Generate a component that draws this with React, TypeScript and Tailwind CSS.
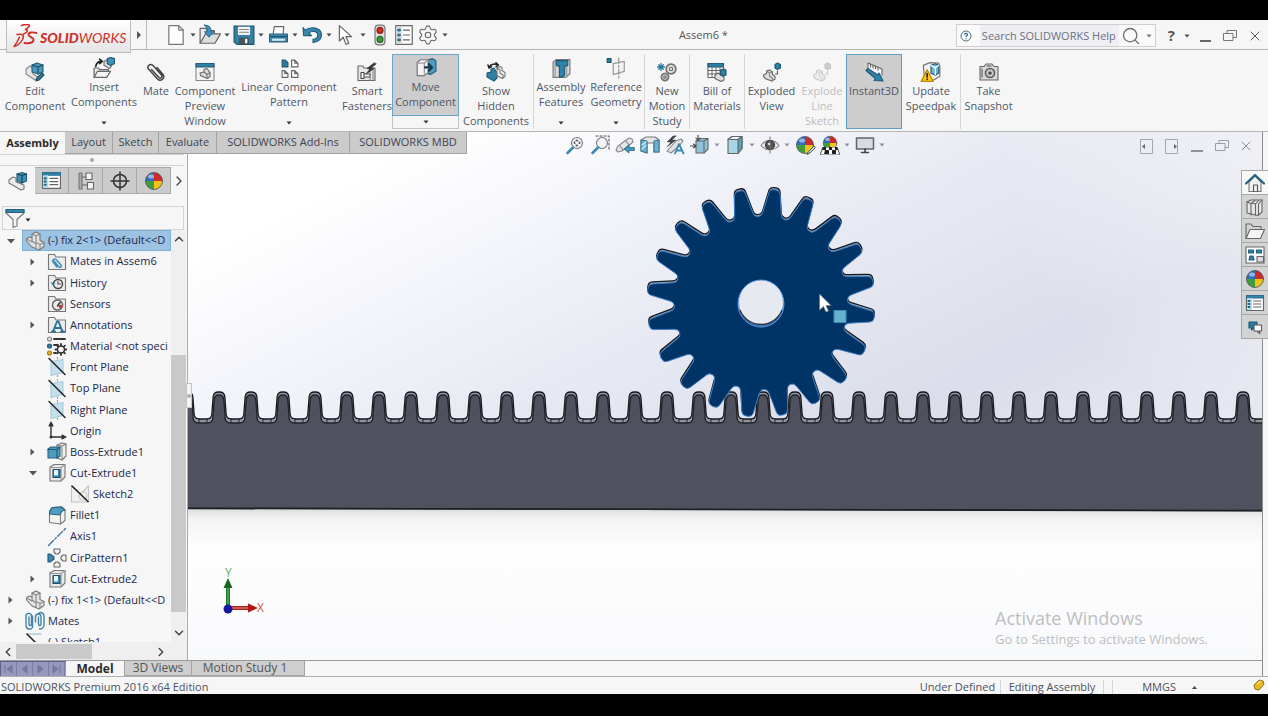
import React from "react";
import {
  ChevronDown,
  ChevronLeft,
  ChevronRight,
  ChevronUp,
  Minus,
  Search,
  Settings,
  X,
} from "lucide-react";

type IconProps = { className?: string };
type SvgProps = IconProps & { children: React.ReactNode };

const Svg = ({ className = "w-5 h-5", children }: SvgProps) => (
  <svg
    viewBox="0 0 20 20"
    className={`shrink-0 ${className}`}
    fill="none"
    stroke="#666"
    strokeWidth="1.1"
    strokeLinejoin="round"
    strokeLinecap="round"
    aria-hidden="true"
  >
    {children}
  </svg>
);

const Caret = ({ className = "text-[#4a4a4a]" }: IconProps) => (
  <svg viewBox="0 0 6 4" className={`w-[6px] h-1 shrink-0 ${className}`} aria-hidden="true">
    <path d="M0.5 0.5h5L3 3.5z" fill="currentColor" />
  </svg>
);

/* ---------- shared icons ---------- */

const Ball = ({ className }: IconProps) => (
  <Svg className={className}>
    <g stroke="none">
      <path d="M10 10V1.5A8.5 8.5 0 0 0 1.5 10z" fill="#2f6fc0" />
      <path d="M10 10V1.5A8.5 8.5 0 0 1 18.5 10z" fill="#cf2b2b" />
      <path d="M10 10v8.5A8.5 8.5 0 0 1 1.5 10z" fill="#3f9e3a" />
      <path d="M10 10v8.5A8.5 8.5 0 0 0 18.5 10z" fill="#f0c41d" />
      <ellipse cx="7" cy="5.5" rx="3" ry="2" fill="#fff" opacity="0.5" />
    </g>
    <circle cx="10" cy="10" r="8.5" stroke="#4b4b55" strokeWidth="0.8" />
  </Svg>
);

const Restore = ({ className }: IconProps) => (
  <svg viewBox="0 0 14 12" className={`w-[14px] h-3 ${className}`} fill="none" stroke="currentColor" aria-hidden="true">
    <path d="M4 3.5v-3h9.5v7H10" />
    <path d="M0.500 3.500h9.500v7h-9.500z" />
  </svg>
);

const PropertyList = ({ className }: IconProps) => (
  <Svg className={className}>
    <path d="M1.500 2.500h17v15h-17z" fill="#fff" />
    <path d="M1.500 2.500h17v2.500h-17z" fill="#3285ab" stroke="#2c6f91" />
    <path d="M2 5h5v12H2z" fill="#b7dcea" stroke="none" />
    <path d="M3.500 8h1M3.500 11h1M3.500 14h1" stroke="#1f6788" strokeWidth="2" />
    <path d="M8.500 8h7.500M8.500 11h7.500M8.500 14h7.500" />
  </Svg>
);

const Part = ({ className }: IconProps) => (
  <Svg className={className}>
    <path d="M1.500 8l2.500-2 3 1V3l4-2 4 2v6.500l4 2v4L14 19l-7-3-5.500-6z" fill="#e3e3e3" stroke="#777" />
    <path d="M7 3l4 2 4-2M11 5v6.500l4 2 4-2M15 13.500V18M7 7v3l4 3v4M1.500 8l5.500 3" stroke="#888" />
  </Svg>
);

const Assembly = ({ className }: IconProps) => (
  <Svg className={className}>
    <path d="M1 9l4-3 3 1v4l8 3v4l-3 1-12-7z" fill="#ececec" stroke="#777" />
    <path d="M9 3l5-1.500 4.500 1.500v7L14 12l-5-2z" fill="#4193b8" stroke="#225c78" />
    <path d="M9 3l5 1.500 4.500-1.500M14 4.500V12" stroke="#123f56" />
  </Svg>
);

const Plane = ({ className }: IconProps) => (
  <Svg className={className}>
    <path d="M4 4.500l12-2v13l-12 3z" fill="#c3dfec" stroke="#a9cbdb" />
    <path d="M10.500 0v2M10.500 18v2" stroke="#8aa" />
    <path d="M2 1.500l16 16" stroke="#222" strokeWidth="1.500" />
  </Svg>
);

const Folder = ({ className, children }: { className?: string; children: React.ReactNode }) => (
  <Svg className={className}>
    <path d="M1.500 17.500v-15h6l1.500 2.500h9.500v12.500z" fill="#ececec" stroke="#777" />
    {children}
  </Svg>
);

const CutExtrude = ({ className }: IconProps) => (
  <Svg className={className}>
    <path d="M3 4l4-2.500h11V14l-4 4H3z" fill="#e9e9e9" stroke="#777" />
    <path d="M14 18V5M3 4.500h11l4-3" stroke="#999" />
    <path d="M6 6.500h7v8H6z" fill="#2f86ae" stroke="#234f66" />
    <path d="M7 7h4v5.500H7z" fill="#e6f4fa" stroke="none" />
  </Svg>
);

/* ---------- title bar ---------- */

const NewDoc = () => (
  <Svg className="w-[22px] h-[22px]">
    <path d="M3.500 1.500h9l4 4v13h-13z" fill="#fff" stroke="#777" />
    <path d="M12.500 1.500v4h4" stroke="#777" />
  </Svg>
);
const OpenDoc = () => (
  <Svg className="w-[24px] h-[22px]">
    <path d="M1 17V4h5l1.500 2H14v4" fill="#eee" stroke="#666" />
    <path d="M1 17.500L6 9h13.500l-5 8.500z" fill="#ddd" stroke="#666" />
    <path d="M5 1c5 0 6 3 6 6h2.500l-4.500 5-4-5h2.500c0-2-.5-4-2.500-6z" fill="#3b93bd" stroke="#235c78" strokeWidth="0.8" />
  </Svg>
);
const Save = () => (
  <Svg className="w-[22px] h-[22px]">
    <path d="M1 2h18v16.500H3.500L1 16.500z" fill="#3480a5" stroke="#1f546e" />
    <path d="M4.500 2.500h11v7.500h-11z" fill="#f3f3f3" stroke="none" />
    <path d="M6 5h8M6 7.500h8" stroke="#888" />
    <path d="M5.500 12.500h9v6h-9z" fill="#49535a" stroke="none" />
    <path d="M11 13.500h2v4h-2z" fill="#fff" stroke="none" />
  </Svg>
);
const Print = () => (
  <Svg className="w-[21px] h-[21px]">
    <path d="M5 9l1-6.500h9L14.500 9" fill="#fff" stroke="#666" />
    <path d="M1.500 9.500h17v7.500h-17z" fill="#3f8eb3" stroke="#2a5f79" />
    <path d="M2.500 12h15" stroke="#174c66" />
    <path d="M4 14h12v2H4z" fill="#d7ebf4" stroke="none" />
  </Svg>
);
const Undo = () => (
  <Svg className="w-[21px] h-[21px]">
    <path d="M1 3.500l2 2.500c5-4 15-3 15.500 4 .2 5-4 7.500-8 7.500v-3c3 0 5-2 4.500-4.500-.5-3.500-6-3.500-8.500-1.500L9 11H1.500z" fill="#3a88ae" stroke="#1f5d7c" />
  </Svg>
);
const Pointer = () => (
  <Svg className="w-[22px] h-[22px]">
    <path d="M4 1.500v14l3.500-3.500 2.500 6.500 2.500-1-2.500-6h5z" fill="#fff" stroke="#666" />
  </Svg>
);
const TrafficLight = () => (
  <Svg className="w-[22px] h-[22px]">
    <rect x="5.500" y="1" width="9" height="18" rx="3" fill="#e0e0e0" stroke="#777" />
    <circle cx="10" cy="5.800" r="2.700" fill="#d1311f" stroke="#8c2116" />
    <circle cx="10" cy="14" r="2.700" fill="#3c9b34" stroke="#256c20" />
  </Svg>
);
const Options = () => (
  <Svg className="w-[22px] h-[22px]">
    <path d="M2.500 1.500h15v17h-15z" fill="#fff" />
    <path d="M3 2h5v16H3z" fill="#d6d6d6" stroke="none" />
    <path d="M5 5.500h1M5 10h1M5 14.500h1" stroke="#246f94" strokeWidth="2.500" />
    <path d="M9.500 5.500H15M9.500 10H15M9.500 14.500H15" />
  </Svg>
);

const quickTools = [
  { name: "New", icon: <NewDoc />, menu: true },
  { name: "Open", icon: <OpenDoc />, menu: true },
  { name: "Save", icon: <Save />, menu: true },
  { name: "Print", icon: <Print />, menu: true },
  { name: "Undo", icon: <Undo />, menu: true },
  { name: "Select", icon: <Pointer />, menu: true },
  { name: "Rebuild", icon: <TrafficLight />, menu: false },
  { name: "File properties", icon: <Options />, menu: false },
  {
    name: "Options",
    icon: <Settings className="w-[22px] h-[22px] text-[#666]" strokeWidth={1.2} />,
    menu: true,
  },
];

const Logo = () => (
  <div className="relative z-10 self-start flex items-center h-[33px] w-[125px] ml-[6px] pl-[5px] bg-gradient-to-b from-white to-[#e4e4e4] border border-[#bdbdbd] border-t-0 text-[#cf2f2a]">
    <svg viewBox="0 0 26 24" className="w-[26px] h-6" fill="none" stroke="currentColor" strokeLinecap="round" strokeLinejoin="round" aria-hidden="true">
      <path d="M9.500 1.500C13 .2 17.500 0 17.500 1.500S14 5 13.500 5.500c3 .3 2.500 3-2 4.500" strokeWidth="1.500" />
      <path d="M5 10.500c5-1 8 .5 5.500 5S4.500 22 2 22.500c2-2.500 4.500-7 5.500-9.500" strokeWidth="1.500" />
      <path d="M24.500 9c-4-1-8-.8-8 1.500 0 2.500 5.500 2.800 5 5.500-.4 2.800-5 3.500-9 3" strokeWidth="1.900" />
    </svg>
    <span className="ml-[2px] pt-1 font-['Lato'] italic text-[14px] leading-none">
      <b className="font-black">SOLID</b>WORKS
    </span>
  </div>
);

const TitleBar = () => (
  <header className="flex items-center h-[30px] border-b border-[#b5b5b5] bg-[#f6f6f6]">
    <Logo />
    <button aria-label="Show menu" className="w-4 h-full flex items-center justify-center border-r border-[#b9b9b9]">
      <svg viewBox="0 0 4 8" className="w-1 h-2" aria-hidden="true">
        <path d="M0 0l4 4-4 4z" fill="#555" />
      </svg>
    </button>
    <div className="flex items-center ml-[18px]">
      {quickTools.map((t) => (
        <button key={t.name} aria-label={t.name} className={t.menu ? "flex items-center w-[34px]" : "flex items-center w-6"}>
          <span className="w-[22px] flex justify-center">{t.icon}</span>
          {t.menu && <Caret className="ml-[3px] text-[#444]" />}
        </button>
      ))}
    </div>
    <h1 className="flex-1 text-center text-[#555] pt-[2px]">Assem6 *</h1>
    <form className="flex items-center h-[23px] w-[200px] mt-[2px] border border-[#cfcfcf] bg-[#fafafa]">
      <svg viewBox="0 0 12 12" className="w-3 h-3 ml-[3px]" fill="none" stroke="#4f6f80" aria-hidden="true">
        <circle cx="6" cy="6" r="5" />
        <path d="M4.500 4.800c0-2 3-2 3 0 0 1-1.500 1-1.500 2.200M6 8.200v1" stroke="#226f94" strokeWidth="1.200" />
      </svg>
      <input
        aria-label="Search SOLIDWORKS Help"
        placeholder="Search SOLIDWORKS Help"
        className="ml-2 w-[139px] h-[21px] bg-[#eeeef3] px-[2px] text-[11px] placeholder:text-[#6c7082] outline-none"
      />
      <button type="button" aria-label="Search" className="flex items-center gap-[5px] pl-[2px]">
        <Search className="w-5 h-5 text-[#6d6d6d]" strokeWidth={1.6} />
        <Caret className="text-[#777]" />
      </button>
    </form>
    <div className="flex items-center pt-[2px] text-[#555]">
      <button aria-label="Help" className="ml-3 flex items-center gap-[9px]">
        <b className="text-[15px] leading-none">?</b>
        <Caret />
      </button>
      <button aria-label="Minimize" className="ml-2 w-[14px] h-3 flex items-end justify-center">
        <span className="w-[11px] h-[2px] bg-[#666]" />
      </button>
      <button aria-label="Restore" className="ml-[11px]"><Restore className="text-[#777]" /></button>
      <button aria-label="Close" className="ml-[10px] mr-[5px]"><X className="w-4 h-4" strokeWidth={1.5} /></button>
    </div>
  </header>
);

/* ---------- ribbon ---------- */

const EditComponentIcon = () => (
  <Svg>
    <path d="M1 7l4-3 3 2v6l5 3-3 3-9-6z" fill="#e6e6e6" stroke="#888" />
    <path d="M7 3l5-2 6 2v7l-5 2-6-2z" fill="#4a98bb" stroke="#235d79" />
    <path d="M7 3l6 2 5-2M13 5v7" stroke="#184a63" />
    <path d="M17 11l2 2-5 5-3 1 1-3z" fill="#2f7fa4" stroke="#234f66" />
  </Svg>
);
const InsertIcon = () => (
  <Svg className="w-[22px] h-[22px]">
    <path d="M1 18.500V10h4l1 1.500h8V13" fill="#eee" />
    <path d="M1 18.500L4 13h12l-3.500 5.500z" fill="#f5f5f5" />
    <path d="M2.500 8.500C3 5 5 4 8 4M6 2l2.500 2L6 6" stroke="#222" strokeWidth="1.500" />
    <path d="M10 4l3-1.500 1.500 4L17 8l-2 2.500-5-3z" fill="#ddd" stroke="#777" />
    <path d="M13 1.500l3-1 3.500 1V6L16 7.500 13 6z" fill="#4193b8" stroke="#235d79" />
  </Svg>
);
const MateIcon = () => (
  <Svg>
    <path d="M5.500 7.500l7.500 8c1.500 1.500 4-.5 2.500-2.500L7 3.500C4.500 1 .5 4 2.500 7l9 10c3 3 8-.5 5.500-4.500L11 5.500" stroke="#444" strokeWidth="1.500" />
  </Svg>
);
const PreviewIcon = () => (
  <Svg>
    <path d="M1 1.500h18v17H1z" fill="#f2f2f2" stroke="#888" />
    <path d="M1 1.500h18v3.500H1z" fill="#2f7fa6" stroke="#235d79" />
    <path d="M5 11l4-1V7.500l3-1 3 4v4l-2.500 2-7-3z" fill="#dcdcdc" stroke="#666" />
    <path d="M9 10l3 2.500v4M12 12.500l3-2" stroke="#777" />
  </Svg>
);
const PatternIcon = () => (
  <Svg className="w-[21px] h-[21px]">
    <path d="M3 2h3l2.500 2.500v4H3z" fill="#2c7aa0" stroke="#1e5874" />
    <path d="M12 2h3l3 3v3.500h-6zM15 2v3h3M3 12h2.500l3 3v3.500H3zM5.500 12v3h3M12 12h3l3 3v3.500h-6zM15 12v3h3" fill="#fff" />
  </Svg>
);
const FastenersIcon = () => (
  <Svg>
    <path d="M1 18.500V4h5l1 2h11v12.500z" fill="#e8e8e8" />
    <path d="M4 10.500h3v6H4zM7 12h6v3H7z" fill="#fff" stroke="#444" />
    <path d="M13 7v11M16 7v11" stroke="#888" />
    <path d="M17 1l-7 5.500 3 .5-4 5 8-5.500-3-.5 5-4z" fill="#333" stroke="#333" strokeWidth="0.700" />
  </Svg>
);
const MoveIcon = () => (
  <Svg className="w-[22px] h-[22px]">
    <path d="M10 3l6-1.500 3 2V13l-5 3-4-2z" fill="#4a9cc2" stroke="#28617e" />
    <path d="M2 5l3-2.500h7V14l-3.500 3H2z" fill="#f4f4f4" stroke="#777" />
    <path d="M2 5.500h6.500L12 2.500M8.500 5.500V17" stroke="#999" />
    <path d="M9 9.500h6M12.500 6.500l3 3-3 3" stroke="#173a4b" strokeWidth="2" />
  </Svg>
);
const ShowHiddenIcon = () => (
  <Svg>
    <path d="M3 5C5 1.500 9 1.500 12 3M10 .800L12.500 3 10 5M2 3l1 3 2.500-1.500" stroke="#222" strokeWidth="1.500" />
    <path d="M1 11l4-1V7l3-1 3 5v5l-3 3-7-4z" fill="#2f7fa6" stroke="#1e5874" />
    <path d="M11 6l3-1.500 2 1v3l3 2v4l-3 2-5-3z" fill="#f0f0f0" stroke="#777" />
    <path d="M11 6l3 2v3l3 2v3" stroke="#777" />
  </Svg>
);
const FeaturesIcon = () => (
  <Svg className="w-[21px] h-[21px]">
    <path d="M2 4l3-2.500h13V15l-4 3.500H2z" fill="#dadada" stroke="#777" />
    <path d="M15 5v13M4 4v14" stroke="#999" />
    <path d="M5 2.500h11V7l-3 1v8.500l-2 1.500H8V8L5 7z" fill="#2f83ab" stroke="#1e5874" />
  </Svg>
);
const GeometryIcon = () => (
  <Svg className="w-[22px] h-[22px]">
    <path d="M2 1.500h3.500V5H2z" fill="#2c7aa0" stroke="#1e5874" />
    <path d="M7.500 6l10-2v9l-10 3z" fill="#f4f4f4" stroke="#999" />
    <path d="M12.500 1v18" stroke="#999" strokeDasharray="5 1.500 2 1.500" />
  </Svg>
);
const MotionIcon = () => (
  <Svg>
    <circle cx="14" cy="7" r="4.800" fill="#e8e8e8" stroke="#777" strokeWidth="1.800" strokeDasharray="2.500 0.500" />
    <circle cx="14" cy="7" r="1.700" />
    <circle cx="8" cy="15" r="3.600" fill="#ddd" stroke="#777" strokeWidth="1.800" strokeDasharray="2.500 0.500" />
    <circle cx="8" cy="15" r="1.300" />
    <path d="M4 1.500v7M.500 5h7M1.800 2.800l4.500 4.500M6.300 2.800L1.800 7.200" stroke="#2c7aa0" strokeWidth="1.300" />
  </Svg>
);
const BomIcon = () => (
  <Svg>
    <path d="M1 1.500h15.500v14H1z" fill="#fff" />
    <path d="M1 1.500h15.500v3.500H1z" fill="#2f7fa6" stroke="#235d79" />
    <path d="M1 8.500h15.500M1 12h15.500M5 5v10.500M9 5v10.500M13 5v10.500" strokeWidth="1" />
    <path d="M8 13l3-2 3 2 3 2v3l-3 1.500-6-3z" fill="#ddd" />
    <path d="M13.500 8l3-1 2.500 1v5l-2.500 1-3-1z" fill="#2f7fa6" stroke="#1e5874" />
  </Svg>
);
const ExplodedIcon = () => (
  <Svg>
    <path d="M1.500 13l3-1.500V9l3-1 3 2v2.500l2.500 2v2.500l-3 2-6-2-2.500-2.500z" fill="#dedede" />
    <path d="M4.500 9l3 2 3-1M7.500 11v3l3 2.500v2.500" stroke="#888" />
    <path d="M13 2.500L15.500 1l3 1.500v3.500l-3 1.500L13 6z" fill="#2f7fa6" stroke="#1e5874" />
    <path d="M15.500 9v3H13" stroke="#555" strokeDasharray="2 1" />
  </Svg>
);
const InstantIcon = () => (
  <Svg>
    <path d="M4 7V1l14 6v6" fill="#f7f7f7" stroke="#666" />
    <path d="M6.500 2.200V5M9 3.200V6M11.500 4.300v2.500M14 5.300V8" stroke="#666" />
    <path d="M2 8.500l2-2 9.500 6.500 1.500-2 4 8-9-.5 1.500-2z" fill="#2f83ab" stroke="#1e5874" />
  </Svg>
);
const SpeedpakIcon = () => (
  <Svg className="w-[22px] h-[22px]">
    <path d="M3 4l6-2.500 8 .5 1 2v10l-6 3.500L4 15z" fill="#f2f2f2" stroke="#777" />
    <path d="M10 4l4-1.500 3 1.500v7l-3 2-4-2z" fill="#6fb4d2" stroke="#28617e" />
    <path d="M14 6v6.500M10 4.200L14 6l3-2" stroke="#fff" />
    <path d="M6.500 8l5.500 10.500H1z" fill="#fcc419" stroke="#b98700" />
    <path d="M6.500 11.500v3M6.500 16.500v.3" stroke="#222" strokeWidth="1.500" />
  </Svg>
);
const CameraIcon = () => (
  <Svg>
    <path d="M1 4.500h4l2-2.500h6l2 2.500h4V18H1z" fill="#d8d8d8" stroke="#666" />
    <circle cx="11" cy="11" r="4.800" fill="#9a9a9a" stroke="#555" />
    <circle cx="11" cy="11" r="2.400" fill="#4a4a4a" stroke="#ddd" />
    <path d="M8 4h4M3 7v8" stroke="#555" />
  </Svg>
);

type Tool = {
  lines: string[];
  icon: React.ReactNode;
  width: string;
  menu?: boolean;
  state?: "active" | "pressed" | "disabled";
  divider?: boolean;
};

const ribbon: Tool[] = [
  { lines: ["Edit", "Component"], icon: <EditComponentIcon />, width: "w-[70px]" },
  { lines: ["Insert", "Components"], icon: <InsertIcon />, width: "w-[68px]", menu: true },
  { lines: ["Mate"], icon: <MateIcon />, width: "w-9" },
  { lines: ["Component", "Preview", "Window"], icon: <PreviewIcon />, width: "w-[62px]" },
  { lines: ["Linear Component", "Pattern"], icon: <PatternIcon />, width: "w-[106px]", menu: true },
  { lines: ["Smart", "Fasteners"], icon: <FastenersIcon />, width: "w-[50px]" },
  { lines: ["Move", "Component"], icon: <MoveIcon />, width: "w-[67px]", menu: true, state: "active" },
  { lines: ["Show", "Hidden", "Components"], icon: <ShowHiddenIcon />, width: "w-[74px]" },
  { lines: ["Assembly", "Features"], icon: <FeaturesIcon />, width: "w-[55px]", menu: true, divider: true },
  { lines: ["Reference", "Geometry"], icon: <GeometryIcon />, width: "w-14", menu: true },
  { lines: ["New", "Motion", "Study"], icon: <MotionIcon />, width: "w-[45px]", divider: true },
  { lines: ["Bill of", "Materials"], icon: <BomIcon />, width: "w-[55px]", divider: true },
  { lines: ["Exploded", "View"], icon: <ExplodedIcon />, width: "w-[54px]", divider: true },
  { lines: ["Explode", "Line", "Sketch"], icon: <ExplodedIcon />, width: "w-12", state: "disabled" },
  { lines: ["Instant3D"], icon: <InstantIcon />, width: "w-14", state: "pressed" },
  { lines: ["Update", "Speedpak"], icon: <SpeedpakIcon />, width: "w-[58px]" },
  { lines: ["Take", "Snapshot"], icon: <CameraIcon />, width: "w-14", divider: true },
];

const RibbonButton = ({ tool }: { tool: Tool }) => {
  const { lines, icon, width, menu, state, divider } = tool;
  const tone =
    state === "active"
      ? "bg-[#cdcdcd] border border-[#6aa5cb]"
      : state === "pressed"
        ? "bg-[#cdcdcd] border border-[#5f9dc6]"
        : "border border-transparent";
  return (
    <div className={`flex flex-col shrink-0 ${width} ${divider ? "border-l border-[#d5d5d5]" : ""}`}>
      <button
        disabled={state === "disabled"}
        className={`flex flex-col items-center leading-[15px] text-[#4f5666] disabled:text-[#bdbdbd] ${tone} ${
          menu ? "pt-[2px] h-[62px]" : "pt-[6px] flex-1"
        }`}
      >
        <span className={`h-[22px] flex items-center ${state === "disabled" ? "opacity-30 grayscale" : ""}`}>{icon}</span>
        {lines.map((l) => (
          <span key={l} className="whitespace-nowrap">{l}</span>
        ))}
      </button>
      {menu && (
        <button
          aria-label={`${lines.join(" ")} options`}
          className={`flex-1 flex items-center justify-center ${state === "active" ? "border border-t-0 border-[#c4c4c4]" : ""}`}
        >
          <Caret className="text-[#333]" />
        </button>
      )}
    </div>
  );
};

const Ribbon = () => (
  <div className="flex h-[82px] pt-1 pb-[2px] bg-[#f6f6f6] border-b border-[#b5b5b5] overflow-hidden">
    {ribbon.map((t) => (
      <RibbonButton key={t.lines.join(" ")} tool={t} />
    ))}
  </div>
);

const tabs = [
  { label: "Assembly", width: "w-[65px]" },
  { label: "Layout", width: "w-[48px]" },
  { label: "Sketch", width: "w-[46px]" },
  { label: "Evaluate", width: "w-[58px]" },
  { label: "SOLIDWORKS Add-Ins", width: "w-[133px]" },
  { label: "SOLIDWORKS MBD", width: "w-[117px]" },
];

const CommandTabs = () => (
  <nav className="relative flex h-[22px] w-fit">
    {tabs.map((t, i) => (
      <button
        key={t.label}
        className={`${t.width} whitespace-nowrap ${
          i === 0 ? "bg-[#f6f6f6] font-bold text-[#2b2b2b]" : "bg-[#cbcbcb] border-r border-b border-[#a3a3a3] text-[#3f4452]"
        }`}
      >
        {t.label}
      </button>
    ))}
  </nav>
);

/* ---------- feature manager ---------- */

const panelTabs = [
  { name: "FeatureManager", icon: <Assembly className="w-5 h-5" /> },
  { name: "PropertyManager", icon: <PropertyList className="w-[21px] h-[21px]" /> },
  {
    name: "ConfigurationManager",
    icon: (
      <Svg>
        <path d="M3 2h3v16H3z" fill="#aaa" stroke="#777" />
        <path d="M6 6h4M6 14h5" />
        <path d="M10 2h6v6.500h-6zM11.500 11.500h6V18h-6z" fill="#f3f3f3" />
      </Svg>
    ),
  },
  {
    name: "DimXpertManager",
    icon: (
      <Svg>
        <circle cx="10" cy="10" r="6.500" stroke="#333" strokeWidth="1.500" />
        <path d="M10 1v18M1 10h18" stroke="#333" strokeWidth="1.500" />
      </Svg>
    ),
  },
  { name: "DisplayManager", icon: <Ball className="w-5 h-5" /> },
];

type Node = { label: string; icon: React.ReactNode; level: number; arrow?: "open" | "closed"; selected?: boolean };

const tree: Node[] = [
  { label: "(-) fix 2<1> (Default<<D", icon: <Part />, level: 0, arrow: "open", selected: true },
  {
    label: "Mates in Assem6",
    icon: (
      <Folder>
        <path d="M7 9l5 6c1.500 1 3-.5 2-2L9 7.500c-2-1.500-4 .5-3 2.500l4 5" stroke="#3f8fb5" strokeWidth="1.500" />
      </Folder>
    ),
    level: 1,
    arrow: "closed",
  },
  {
    label: "History",
    icon: (
      <Folder>
        <circle cx="11" cy="11" r="4.500" stroke="#444" strokeWidth="1.400" />
        <path d="M11 8.500V11h2.500" stroke="#444" />
        <path d="M3.500 9.500h5L6 12.500z" fill="#2f7fa6" stroke="none" />
      </Folder>
    ),
    level: 1,
    arrow: "closed",
  },
  {
    label: "Sensors",
    icon: (
      <Folder>
        <circle cx="10.500" cy="11" r="5" strokeWidth="1.500" strokeDasharray="3 1" />
        <path d="M10.500 12L13 8.500" stroke="#333" strokeWidth="1.500" />
        <circle cx="13.500" cy="12.500" r="1.800" fill="#c33" stroke="none" />
      </Folder>
    ),
    level: 1,
  },
  {
    label: "Annotations",
    icon: (
      <Folder>
        <path d="M6 16.500l4-10h1.500l4 10M8 13h6M5 16.500h3M14 16.500h3" stroke="#2a7197" strokeWidth="1.900" />
      </Folder>
    ),
    level: 1,
    arrow: "closed",
  },
  {
    label: "Material <not speci",
    icon: (
      <Svg>
        <circle cx="2.500" cy="3" r="2" fill="#ddd" stroke="#888" />
        <circle cx="2.500" cy="10" r="2" fill="#2f7fa6" stroke="#1e5874" />
        <circle cx="2.500" cy="17" r="2" fill="#e8b422" stroke="#a67c0c" />
        <path d="M7 3h11M7 9h4M7 17h2" stroke="#333" strokeWidth="1.800" />
        <circle cx="14" cy="13.500" r="3.500" stroke="#333" strokeWidth="1.500" />
        <path d="M14 8v1.500M14 17.500V19M8.500 13.500H10M18 13.500h1.500M10.200 9.700l1 1M16.900 16.300l1 1M17.900 9.700l-1 1M11.200 16.300l-1 1" stroke="#333" strokeWidth="1.800" />
      </Svg>
    ),
    level: 1,
  },
  { label: "Front Plane", icon: <Plane />, level: 1 },
  { label: "Top Plane", icon: <Plane />, level: 1 },
  { label: "Right Plane", icon: <Plane />, level: 1 },
  {
    label: "Origin",
    icon: (
      <Svg>
        <path d="M4 4v12h12" stroke="#333" strokeWidth="1.400" />
        <path d="M4 1l2 4H2zM19 16l-4-2v4z" fill="#333" stroke="#333" />
        <circle cx="4" cy="16" r="1.500" fill="#333" stroke="none" />
      </Svg>
    ),
    level: 1,
  },
  {
    label: "Boss-Extrude1",
    icon: (
      <Svg>
        <path d="M10 3l5-2 4 1v12l-4 4-5-2z" fill="#efefef" stroke="#777" />
        <path d="M15 4l4-2M15 4v14M15 4l-5-1" stroke="#888" />
        <path d="M1 7l3-2h9v9l-3 2H1z" fill="#4d9dc1" stroke="#28617e" />
        <path d="M1 7.500h9l3-2.500M10 8v8" stroke="#1e5874" />
      </Svg>
    ),
    level: 1,
    arrow: "closed",
  },
  { label: "Cut-Extrude1", icon: <CutExtrude />, level: 1, arrow: "open" },
  {
    label: "Sketch2",
    icon: (
      <Svg>
        <path d="M1.500 2v16h17V2l-8 8z" fill="#f0f0f0" stroke="#c2c2c2" />
        <circle cx="13" cy="12" r="4" stroke="#ccc" />
        <path d="M2 2l16 15.500" stroke="#222" strokeWidth="1.600" />
      </Svg>
    ),
    level: 2,
  },
  {
    label: "Fillet1",
    icon: (
      <Svg>
        <path d="M2.500 5l3-3.500 9-.5 3.500 3v10.500L13.500 18l-11-1.500z" fill="#f2f2f2" stroke="#777" />
        <path d="M2.500 8c0-3 1-5 3-6.500l9-.5 3.500 3c-3 .5-4.500 2-4.500 5z" fill="#4d9dc1" stroke="#28617e" />
        <path d="M13.500 9v9" stroke="#888" />
      </Svg>
    ),
    level: 1,
  },
  {
    label: "Axis1",
    icon: (
      <Svg>
        <path d="M1.500 18.500l17-17" stroke="#3a6f9d" strokeWidth="1.300" strokeDasharray="7 2 2 2" />
      </Svg>
    ),
    level: 1,
  },
  {
    label: "CirPattern1",
    icon: (
      <Svg>
        <path d="M7 1h6v3l-2 2H9L7 4zM9 14h2l2 2v3H7v-3zM19 7v6h-3l-2-2V9l2-2z" fill="#f3f3f3" />
        <path d="M1 6h2l4 3v2l-4 3H1z" fill="#3a88ae" stroke="#1e5874" />
      </Svg>
    ),
    level: 1,
  },
  { label: "Cut-Extrude2", icon: <CutExtrude />, level: 1, arrow: "closed" },
  { label: "(-) fix 1<1> (Default<<D", icon: <Part />, level: 0, arrow: "closed" },
  {
    label: "Mates",
    icon: (
      <Svg>
        <path d="M4 6v7c0 2 2.500 2 2.500 0V5C6.500 1.500 1 1.500 1 5v9c0 5 5 5 6.500 2.500V5" stroke="#3f84a8" strokeWidth="1.400" />
        <path d="M13.500 6v7c0 2 2.500 2 2.500 0V6c0-4-5.500-4-5.500 0v5M13 3c2-3 6-1 6 2v9c0 3-3 4-4.500 4" stroke="#3f84a8" strokeWidth="1.400" />
      </Svg>
    ),
    level: 0,
    arrow: "closed",
  },
  {
    label: "(-) Sketch1",
    icon: (
      <Svg>
        <path d="M2 2h14" stroke="#8fb7ca" />
        <path d="M2 2l16 16" stroke="#222" strokeWidth="1.600" />
      </Svg>
    ),
    level: 0,
  },
];

const indents = ["pl-[4px]", "pl-[26px]", "pl-[49px]"];

const TreeRow = ({ node }: { node: Node }) => (
  <li className={`flex items-center min-h-0 ${indents[node.level]}`}>
    <button aria-label={`Toggle ${node.label}`} disabled={!node.arrow} className="w-[18px] h-3 flex items-center pl-[3px] shrink-0">
      {node.arrow && (
        <svg viewBox="0 0 8 8" className="w-2 h-2" aria-hidden="true">
          <path d={node.arrow === "open" ? "M0 2h8L4 6.500z" : "M1.500 0.500L5.500 4l-4 3.500z"} fill="#555" />
        </svg>
      )}
    </button>
    <span
      className={`flex items-center gap-[3px] h-full grow pl-[2px] whitespace-nowrap text-[#20264a] border ${
        node.selected ? "bg-[#9dc3e2] border-[#7eb0d8]" : "border-transparent"
      }`}
    >
      {node.icon}
      {node.label}
    </span>
  </li>
);

const FeaturePanel = () => (
  <aside className="relative flex-1 min-h-0 w-[188px] flex flex-col bg-[#f6f6f6] border-r border-[#ababab]">
    <div className="h-[12px] mr-[3px] border-y border-[#d2d2d2] flex items-center justify-center">
      <span className="w-1 h-1 rounded-full bg-[#a9a9a9]" />
    </div>
    <div className="flex items-center mt-[1px] h-[27px]">
      {panelTabs.map((t, i) => (
        <button
          key={t.name}
          aria-label={t.name}
          className={`h-full flex items-center justify-center ${
            i === 0 ? "w-[35px]" : "w-[34px] bg-[#cbcbcb] border-r border-y border-[#a9a9a9]"
          }`}
        >
          {t.icon}
        </button>
      ))}
      <button aria-label="More tabs" className="flex-1 flex justify-end">
        <ChevronRight className="w-4 h-4 text-[#444]" strokeWidth={2} />
      </button>
    </div>
    <button aria-label="Filter" className="flex items-center mt-[12px] ml-[2px] mr-[3px] h-6 border border-[#d4d4d4] pl-[2px]">
      <Svg className="w-5 h-5">
        <path d="M1 2h18v3l-7 6.500V18l-4 1.500v-8L1 5z" fill="#f4f4f4" stroke="#777" />
        <path d="M1 1.500h18v3H1z" fill="#3285ab" stroke="#28617e" />
      </Svg>
      <Caret className="text-[#222] mt-1" />
    </button>
    <div className="flex-1 min-h-0 flex">
      <ul className="w-[171px] h-[423px] grid auto-rows-fr overflow-hidden">
        {tree.map((n) => (
          <TreeRow key={n.label} node={n} />
        ))}
      </ul>
      <div className="flex-1 mr-[1px] flex flex-col items-center bg-[#efefef] text-[#444]">
        <ChevronUp className="w-[14px] h-[18px] shrink-0" strokeWidth={2.5} />
        <div className="w-full mt-[107px] h-[257px] shrink-0 bg-[#c9c9c9]" />
        <ChevronDown className="w-[14px] h-[18px] mt-auto shrink-0" strokeWidth={2.5} />
      </div>
    </div>
    <div className="relative flex items-center h-[18px] shrink-0 bg-[#efefef] text-[#444] border-t border-[#efefef]">
      <ChevronLeft className="w-4 h-[14px]" strokeWidth={2.5} />
      <div className="w-[76px] h-[15px] bg-[#c9c9c9]" />
      <ChevronRight className="w-4 h-[14px] ml-[61px]" strokeWidth={2.5} />
    </div>
    {/* splitter handle */}
    <div className="absolute -right-[5px] top-[229px] w-[6px] h-[25px] bg-[#f4f4f4] border border-[#c4c4c4] flex items-center justify-center">
      <span className="w-1 h-1 rounded-full bg-[#b0b0b0] shrink-0" />
    </div>
  </aside>
);

/* ---------- graphics area ---------- */

type Point = [number, number];

// Builds a path through the points with every corner rounded off
const roundedPath = (pts: Point[], r: number, closed: boolean) => {
  const toward = (a: Point, b: Point): Point => {
    const d = Math.hypot(b[0] - a[0], b[1] - a[1]);
    const k = Math.min(r, d / 2) / d;
    return [a[0] + (b[0] - a[0]) * k, a[1] + (b[1] - a[1]) * k];
  };
  const n = pts.length;
  const parts: string[] = [];
  pts.forEach((p, i) => {
    if (!closed && (i === 0 || i === n - 1)) {
      parts.push(`${i === 0 ? "M" : "L"}${p[0]} ${p[1]}`);
      return;
    }
    const a = toward(p, pts[(i + n - 1) % n]);
    const b = toward(p, pts[(i + 1) % n]);
    parts.push(`${parts.length ? "L" : "M"}${a[0]} ${a[1]}Q${p[0]} ${p[1]} ${b[0]} ${b[1]}`);
  });
  return parts.join("") + (closed ? "Z" : "");
};

const gearPoints: Point[] = [];
for (let i = 0; i < 20; i++) {
  const a = ((7 + i * 18) * Math.PI) / 180;
  const tooth: Point[] = [[-10, 86], [-5, 114], [5, 114], [10, 86]];
  tooth.forEach(([u, v]) => {
    gearPoints.push([v * Math.sin(a) + u * Math.cos(a), -v * Math.cos(a) + u * Math.sin(a)]);
  });
}
const gearPath = roundedPath(gearPoints, 4, true);

const PITCH = 32;
const TEETH = 90;
const rackPath = (top: number, root: number, inset: number) => {
  const pts: Point[] = [[150, root]];
  for (let i = -1; i < TEETH; i++) {
    const cx = 219 + i * PITCH;
    pts.push([cx - 7.5 + inset, root], [cx - 5.5 + inset, top], [cx + 5.5 - inset, top], [cx + 7.5 - inset, root]);
  }
  pts.push([3200, root]);
  return roundedPath(pts, 5, false);
};

// Short edge lines where the fillets meet the floor between teeth
const floorTicks = Array.from({ length: TEETH }, (_, i) => {
  const x = 187 + i * PITCH;
  return `M${x + 12} 287v4M${x + 20} 287v4`;
}).join("");

const Scene = () => (
  <svg className="absolute inset-0 w-full h-full" aria-label="Rack and pinion model">
    <defs>
      <linearGradient id="sky" gradientUnits="userSpaceOnUse" x1="90" y1="178" x2="360" y2="712">
        <stop offset="0" stopColor="#ffffff" />
        <stop offset="0.200" stopColor="#f5f6fb" />
        <stop offset="0.450" stopColor="#e8eaf3" />
        <stop offset="0.770" stopColor="#dbdeea" />
        <stop offset="1" stopColor="#e6e8f1" />
      </linearGradient>
      <radialGradient id="glow" gradientUnits="userSpaceOnUse" cx="1262" cy="20" r="260">
        <stop offset="0" stopColor="#fff" stopOpacity="0.500" />
        <stop offset="1" stopColor="#fff" stopOpacity="0" />
      </radialGradient>
      <linearGradient id="ground" x1="0" y1="0" x2="0" y2="1">
        <stop offset="0" stopColor="#dcdcdc" />
        <stop offset="0.060" stopColor="#f2f2f3" />
        <stop offset="0.250" stopColor="#fefefe" />
        <stop offset="1" stopColor="#f8f9fb" />
      </linearGradient>
    </defs>
    <rect width="100%" height="100%" fill="url(#sky)" />
    <rect width="100%" height="100%" fill="url(#glow)" />
    <rect y="377" width="100%" height="152" fill="url(#ground)" />
    <path d={`${rackPath(260, 287, 0)}V378L150 376Z`} fill="#9193a0" stroke="#17181d" strokeWidth="1.300" />
    <path d={floorTicks} stroke="#22242b" />
    <path d={`${rackPath(263, 291, 1)}V384L150 376Z`} fill="#4f525e" stroke="#22242b" strokeWidth="1.400" />
    <path d="M188 376.500L1262 378.500" stroke="#1d1f26" strokeWidth="1.500" />

    <g transform="translate(761 169)">
      <path d={gearPath} fill="#8fa3bd" stroke="#15181f" strokeWidth="1.300" />
      <path d={gearPath} transform="translate(0 2)" fill="#003366" stroke="#3f7fc4" strokeWidth="1" />
      <circle cy="3" r="23" fill="#2d5e96" stroke="#5c9be0" />
      <circle r="22.500" fill="#e7e9f1" stroke="#5c9be0" cy="1.500" />
      <path d="M-21 9A22.500 22.500 0 0 0 21 9" stroke="#222a38" strokeWidth="1.200" fill="none" />
    </g>

    {/* selection badge and mouse pointer */}
    <path d="M834 178.500h12v12h-12z" fill="#63b3cf" stroke="#3d8fb0" />
    <path d="M819.500 162v16l4-3.500 2.500 5.500 2.500-1-2.500-5.500h5z" fill="#fff" stroke="#777" strokeWidth="0.800" />

    {/* axis triad */}
    <g transform="translate(228 477)" fontFamily="Open Sans, sans-serif" fontSize="12">
      <path d="M0 0V-21" stroke="#1f7a26" strokeWidth="4" />
      <path d="M0 0V-21" stroke="#6fbd74" strokeWidth="1" />
      <path d="M-4.500-21L0-31l4.500 10z" fill="#17661d" />
      <path d="M0-1H21" stroke="#b02020" strokeWidth="4" />
      <path d="M0-1H21" stroke="#eb8c8c" strokeWidth="1" />
      <path d="M20-5.500L30-1 20 3.500z" fill="#b01818" />
      <circle r="4.500" fill="#17179c" />
      <text x="-3" y="-32" fill="#5fae63">Y</text>
      <text x="29" y="3" fill="#d05050">X</text>
    </g>
  </svg>
);

const Magnifier = ({ area }: { area?: boolean }) => (
  <Svg>
    {area && <path d="M6 1h13v13" strokeDasharray="2 2" stroke="#555" />}
    <circle cx="12" cy="8" r="5.500" fill="#f4f4f8" stroke="#777" />
    {!area && <path d="M12 4.800l1 1.200h-2zM12 11.200l1-1.200h-2zM8.800 8l1.200 1V7zM15.200 8L14 9V7z" fill="#333" stroke="#333" strokeWidth="0.500" />}
    <path d="M8 12.500L2.500 18" stroke="#3a88ae" strokeWidth="2.500" />
  </Svg>
);

const Cube = () => (
  <Svg>
    <path d="M3 4.500l4-3h10v12l-4 5H3z" fill="#a9d4e6" stroke="#666" />
    <path d="M3 4.500l4-3h10l-4 3z" fill="#f0f6f9" stroke="#666" />
    <path d="M13 4.500v14l4-5v-12z" fill="#5b9fbe" stroke="#666" />
  </Svg>
);

const viewTools = [
  { name: "Zoom to fit", icon: <Magnifier /> },
  { name: "Zoom to area", icon: <Magnifier area /> },
  {
    name: "Previous view",
    icon: (
      <Svg>
        <path d="M1 15l2-4L14 3l3 1 1 3-11 9-4 1z" fill="#e6e6e6" stroke="#888" />
        <path d="M11 6l3 4M5 11l3 4" stroke="#888" />
        <path d="M19 12.500h-5V10l-5 4 5 4v-2.500h5z" fill="#4797bd" stroke="#28617e" strokeWidth="0.800" />
      </Svg>
    ),
  },
  {
    name: "Section view",
    icon: (
      <Svg>
        <path d="M1 5l5-3h9l4 3v12h-5V8H7v10l-6-2z" fill="#e6e6e6" stroke="#777" />
        <path d="M1 5l6 1v12l-6-2zM14 6l5-1v12h-5z" fill="#6db1cf" stroke="#3c7896" />
        <path d="M2 10l4-3M2 14l4-4" stroke="#d4ebf5" />
      </Svg>
    ),
  },
  {
    name: "Dynamic annotation views",
    icon: (
      <Svg>
        <path d="M2 16l9-10 5-2 2 2-3 4-9 8z" fill="#e2e2e2" stroke="#888" />
        <path d="M8 1L2 7h4l-4 5 9-7H7l4-4z" fill="#444" stroke="#444" strokeWidth="0.500" />
        <path d="M10 18.500L14 9l4.500 9.500M11.500 15.500h5" stroke="#3a88ae" strokeWidth="1.800" />
      </Svg>
    ),
  },
  {
    name: "View orientation",
    icon: (
      <Svg>
        <path d="M6 6l4-2.500h8V14l-4 4H6z" fill="#8dc3da" stroke="#666" />
        <path d="M6 6h8l4-2.500M14 6v12" />
        <path d="M8 0v5M6 3l2 2.500L10 3M0 11h6M3.500 9L6 11l-2.500 2" stroke="#444" />
      </Svg>
    ),
    menu: true,
  },
  { name: "Display style", icon: <Cube />, menu: true },
  {
    name: "Hide/show items",
    icon: (
      <Svg>
        <path d="M1 10.500C5 4 15 4 19 10.500 15 16 5 16 1 10.500z" fill="#e8e8e8" stroke="#888" />
        <circle cx="10" cy="10" r="4.500" fill="#555" stroke="#333" />
        <path d="M10 2v16" stroke="#777" />
        <circle cx="9" cy="9" r="1.200" fill="#ddd" stroke="none" />
      </Svg>
    ),
    menu: true,
  },
  {
    name: "Edit appearance",
    icon: (
      <span className="relative flex">
        <Ball className="w-5 h-5" />
        <svg viewBox="0 0 10 10" className="absolute -right-[1px] bottom-0 w-[10px] h-[10px]" aria-hidden="true">
          <path d="M8 1l1.500 1.500L4 8l-3 1.500L2.500 6.500z" fill="#b8dbe8" stroke="#555" />
        </svg>
      </span>
    ),
  },
  {
    name: "Apply scene",
    icon: (
      <span className="relative flex justify-center w-5 h-5">
        <Ball className="w-4 h-4" />
        <svg viewBox="0 0 20 8" className="absolute left-0 bottom-0 w-5 h-2" aria-hidden="true">
          <path d="M3 0h14l3 8H0z" fill="#fff" stroke="#555" />
          <path d="M3 0h3v3H2zM9 0h3v3H9zM15 0h2l1 3h-3zM5 3h4v4H4zM12 3h4v4h-4z" fill="#222" />
        </svg>
      </span>
    ),
    menu: true,
  },
  {
    name: "View settings",
    icon: (
      <Svg>
        <path d="M1.500 3h17v11h-17z" fill="#d9dbe0" stroke="#666" strokeWidth="1.500" />
        <path d="M10 14v3M6.500 17.500h7" stroke="#444" strokeWidth="1.600" />
      </Svg>
    ),
    menu: true,
  },
];

const ViewToolbar = () => (
  <div className="absolute top-[3px] left-[565px] flex items-center gap-[5px]">
    {viewTools.map((t) => (
      <button key={t.name} aria-label={t.name} className={`flex items-center gap-1 ${t.menu ? "w-[30px]" : "w-5"}`}>
        {t.icon}
        {t.menu && <Caret className="text-[#8d8f98]" />}
      </button>
    ))}
  </div>
);

const PaneToggle = ({ flip }: { flip?: boolean }) => (
  <svg viewBox="0 0 14 15" className="w-[14px] h-[15px]" fill="none" stroke="#a4a6ae" aria-hidden="true">
    <path d="M.500.500h12v14H.500z" />
    <path d={flip ? "M9 5l3 2.500L9 10z" : "M5 5L2 7.500 5 10z"} fill="#666" stroke="none" />
  </svg>
);

const DocumentControls = () => (
  <div className="absolute top-[6px] right-2 flex items-center text-[#8f9199]">
    <button aria-label="Collapse left pane" className="w-[25px] flex justify-center"><PaneToggle /></button>
    <button aria-label="Collapse right pane" className="w-[25px] flex justify-center"><PaneToggle flip /></button>
    <button aria-label="Minimize document" className="w-[25px] flex justify-center pt-[10px]"><Minus className="w-3 h-[2px] bg-[#8f9199]" /></button>
    <button aria-label="Restore document" className="w-[25px] flex justify-center"><Restore className="text-[#9b9da5]" /></button>
    <button aria-label="Close document" className="w-4 ml-1"><X className="w-4 h-4" strokeWidth={1.500} /></button>
  </div>
);

const paneButtons = [
  {
    name: "Resources",
    icon: (
      <Svg>
        <path d="M4 9v9.500h12V9l-6-6z" fill="#f0f0f0" stroke="#777" />
        <path d="M8.500 18.500V12h4v6.500" stroke="#555" />
        <path d="M1 10.500l9-8.500 9 8.500" stroke="#24627f" strokeWidth="2.200" />
      </Svg>
    ),
  },
  {
    name: "Design Library",
    icon: (
      <Svg>
        <path d="M2 5l4-2h11v12l-4 3.500L2 16z" fill="#e6e6e6" />
        <path d="M2 5l4 1.500v11.500M6 6.500l4-3M6.500 6l4 1v11M10.500 7l3-3.500M13.500 7v11M13.500 7L17 3" />
      </Svg>
    ),
  },
  {
    name: "File Explorer",
    icon: (
      <Svg>
        <path d="M1 17.500V3h5l2 2.500h8V9" fill="#d2d2d2" />
        <path d="M1 17.500L5 8.500h14.500l-4 9z" fill="#f5f5f5" />
      </Svg>
    ),
  },
  {
    name: "View Palette",
    icon: (
      <Svg>
        <path d="M1 2h18v16H1z" fill="#fff" />
        <path d="M3.500 5h5v3h-5zM11.500 5h5v3h-5zM4 15l1-4h3l1 4z" fill="#3285ab" stroke="#235d79" />
        <path d="M12 11.500h6.500V17H12z" fill="#ddd" />
      </Svg>
    ),
  },
  { name: "Appearances", icon: <Ball /> },
  { name: "Custom Properties", icon: <PropertyList /> },
  {
    name: "Forum",
    icon: (
      <Svg>
        <path d="M4 5h8v6H8.500L6.500 13v-2H4z" fill="#2c7aa0" stroke="#1e5874" />
        <path d="M9 8h7.500v6H14l1 2.500-3-2.500H9z" fill="#fff" stroke="#555" />
      </Svg>
    ),
  },
];

const TaskPane = () => (
  <div className="absolute right-0 top-[38px] w-[27px] border-l border-t border-[#a7a7a7]">
    {paneButtons.map((b, i) => (
      <button
        key={b.name}
        aria-label={b.name}
        className={`w-full h-6 flex items-center justify-center border-b border-[#a7a7a7] ${i === 0 ? "bg-[#f8f8f8]" : "bg-[#d3d3d3]"}`}
      >
        {b.icon}
      </button>
    ))}
  </div>
);

/* ---------- bottom bars ---------- */

const navPaths = ["M4 3v8M11 3L6 7l5 4z", "M10 3L5 7l5 4z", "M5 3l5 4-5 4z", "M4 3l5 4-5 4zM11 3v8"];

const MotionTabs = () => (
  <div className="flex h-4 bg-[#f6f6f6] text-[12px] leading-[14px] border-t border-[#9b9b9b]">
    <div className="flex bg-[#9699ba] border-l border-t border-[#5f6288] pr-[1px]">
      {navPaths.map((d) => (
        <button key={d} aria-label="Scroll tabs" className="w-4 border-r border-[#7b7ea5]">
          <svg viewBox="0 0 15 14" className="w-full h-[14px]" aria-hidden="true">
            <path d={d} fill="#7578a0" stroke="#7578a0" />
          </svg>
        </button>
      ))}
    </div>
    <button className="w-[58px] font-bold text-[#2b2b2b]">Model</button>
    <button className="w-[68px] bg-[#cecece] border-x border-b border-[#a3a3a3] text-[#555]">3D Views</button>
    <button className="w-[113px] bg-[#cecece] border-r border-b border-[#a3a3a3] text-[#555] pr-[6px]">Motion Study 1</button>
  </div>
);

const StatusBar = () => (
  <footer className="flex items-center h-[18px] pt-[3px] shrink-0 bg-[#f6f6f6] border-t border-[#b0b0b0] text-[#4d5260] leading-[14px] whitespace-nowrap">
    <span className="flex-1 pl-[1px]">SOLIDWORKS Premium 2016 x64 Edition</span>
    <span className="w-[86px] text-center border-r border-[#d5d5d5]">Under Defined</span>
    <span className="w-[103px] text-center border-r border-[#d5d5d5]">Editing Assembly</span>
    <span className="w-[9px] h-[14px] border-r border-[#d5d5d5]" />
    <button className="w-[87px] flex items-center justify-end gap-4 pr-[3px]">
      MMGS
      <svg viewBox="0 0 5 3" className="w-[5px] h-[3px]" aria-hidden="true"><path d="M0 3h5L2.500 0z" fill="#444" /></svg>
    </button>
    <button aria-label="Tags" className="w-[68px] flex justify-end pr-[3px] pb-[5px]">
      <svg viewBox="0 0 12 12" className="w-3 h-3" aria-hidden="true">
        <path d="M1 6l5-5 4 1 1 3-5 6-4-1z" fill="#eab91e" stroke="#8f6f10" />
        <path d="M4 5l4-3" stroke="#fff2b0" />
      </svg>
    </button>
  </footer>
);

const App = () => {
  return (
    <div className="h-screen flex flex-col bg-black pt-5 pb-[22px] text-[11px] overflow-hidden font-['Open_Sans',sans-serif]">
      <TitleBar />
      <Ribbon />
      <div className="relative flex-1 min-h-0 flex bg-[#f6f6f6]">
        <div className="flex-1 min-w-0 flex flex-col">
          <main className="relative flex-1 min-h-0 flex flex-col items-start overflow-hidden">
            <Scene />
            <CommandTabs />
            <FeaturePanel />
            <ViewToolbar />
            <DocumentControls />
            <div className="absolute right-[46px] bottom-[11px] w-[221px] text-[#bdbec2]">
              <p className="text-[18px] leading-[22px]">Activate Windows</p>
              <p className="text-[13px] leading-[20px]">Go to Settings to activate Windows.</p>
            </div>
          </main>
          <MotionTabs />
        </div>
        <div className="w-[6px] border-l border-[#8c8c8c]" />
        <TaskPane />
      </div>
      <StatusBar />
    </div>
  );
};

export default App;
